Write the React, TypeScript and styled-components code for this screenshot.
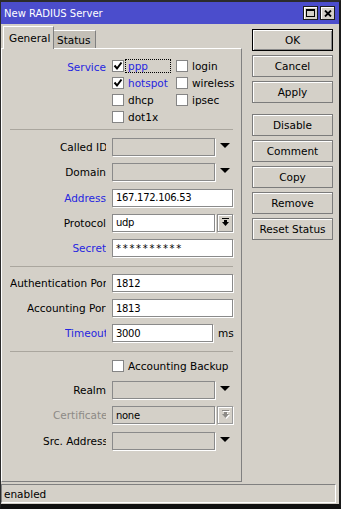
import React from 'react';
import styled, { createGlobalStyle } from 'styled-components';

const Global = createGlobalStyle`
  html, body { margin: 0; padding: 0; background: #161616; }
  body { font-family: "DejaVu Sans", "Liberation Sans", sans-serif; font-size: 10.5px; color: #000; }
`;

const Window = styled.div`
  width: 341px;
  height: 509px;
  box-sizing: border-box;
  border-top: 2px solid #2b2b2b;
  border-left: 1px solid #2b2b2b;
  border-right: 2px solid #1a1a1a;
  border-bottom: 5px solid #111;
  background: #d4d0c8;
  display: flex;
  flex-direction: column;
`;

const TitleBar = styled.div`
  height: 22px;
  flex: none;
  background: #4b4dcc;
  color: #fff;
  display: flex;
  align-items: center;
  padding: 0 4px 0 3px;
  font-size: 10px;
`;

const TitleText = styled.span`
  flex: 1;
  white-space: nowrap;
`;

const TitleButtons = styled.div`
  display: flex;
  gap: 2px;
`;

const TitleButton = styled.div`
  width: 15px;
  height: 14px;
  box-sizing: border-box;
  background: #d4d0c8;
  border: 1px solid #1c1c1c;
  box-shadow: inset 1px 1px 0 #fff;
  display: flex;
  align-items: center;
  justify-content: center;
`;

const Body = styled.div`
  flex: 1;
  display: flex;
  flex-direction: column;
  padding: 2px 3px 1px 0;
  min-height: 0;
`;

const Main = styled.div`
  flex: 1;
  display: flex;
  min-height: 0;
`;

const LeftCol = styled.div`
  width: 241px;
  display: flex;
  flex-direction: column;
`;

const Tabs = styled.div`
  height: 23px;
  display: flex;
  align-items: flex-end;
  padding-left: 2px;
  margin-bottom: -1px;
  position: relative;
  z-index: 1;
`;

const Tab = styled.div<{ $active?: boolean }>`
  box-sizing: border-box;
  display: flex;
  align-items: center;
  white-space: nowrap;
  border-top: 1px solid #fff;
  border-right: 1px solid #808080;
  ${(p) =>
    p.$active
      ? `
    width: 51px;
    height: 23px;
    padding-left: 5px;
    border-left: 1px solid #fff;
    background: #d4d0c8;
  `
      : `
    width: 42px;
    height: 18px;
    padding-left: 3px;
    margin-bottom: 1px;
    background: #c3bfb7;
  `}
`;

const Panel = styled.div`
  flex: 1;
  box-sizing: border-box;
  border-top: 1px solid #fff;
  border-left: 1px solid #fff;
  border-right: 1px solid #808080;
  border-bottom: 1px solid #808080;
  padding-top: 10px;
  display: flex;
  flex-direction: column;
`;

const Row = styled.div`
  display: grid;
  grid-template-columns: 104px auto;
  column-gap: 6px;
  align-items: center;
  height: 18px;
`;

const ServiceRow = styled.div`
  display: grid;
  grid-template-columns: 104px auto;
  column-gap: 6px;
  align-items: start;
`;

const LabelCell = styled.div<{ $top?: boolean }>`
  display: flex;
  justify-content: flex-end;
  overflow: hidden;
  white-space: nowrap;
  ${(p) => (p.$top ? 'height: 15px; align-items: center;' : '')}
`;

const LabelText = styled.span<{ $tone?: 'blue' | 'gray'; $clip?: number }>`
  white-space: nowrap;
  overflow: hidden;
  color: ${(p) => (p.$tone === 'blue' ? '#2626e0' : p.$tone === 'gray' ? '#8c8a86' : '#000')};
  ${(p) => (p.$clip ? `max-width: ${p.$clip}px;` : '')}
`;

const CheckGrid = styled.div`
  display: grid;
  grid-template-columns: 64px auto;
  grid-auto-rows: 17px;
`;

const CheckItem = styled.div`
  display: flex;
  align-items: flex-start;
`;

const Box = styled.div`
  width: 12px;
  height: 12px;
  box-sizing: border-box;
  margin-top: 1px;
  margin-right: 1px;
  background: #fff;
  border: 1px solid #858585;
  display: flex;
  align-items: center;
  justify-content: center;
  flex: none;
`;

const CheckText = styled.span<{ $blue?: boolean; $focus?: boolean }>`
  height: 14px;
  box-sizing: border-box;
  display: flex;
  align-items: center;
  padding: 0 2px;
  border: 1px ${(p) => (p.$focus ? 'dotted #000' : 'solid transparent')};
  ${(p) => (p.$focus ? 'width: 46px;' : '')}
  color: ${(p) => (p.$blue ? '#2626e0' : '#000')};
  white-space: nowrap;
`;

const Separator = styled.div<{ $top: number; $bottom: number }>`
  height: 1px;
  width: 223px;
  margin: ${(p) => p.$top}px 0 ${(p) => p.$bottom}px 8px;
  background: #aaa69e;
  flex: none;
`;

const Stack = styled.div<{ $gap: number }>`
  display: flex;
  flex-direction: column;
  gap: ${(p) => p.$gap}px;
`;

const Control = styled.div`
  display: flex;
  align-items: flex-start;
  height: 18px;
`;

const Field = styled.div<{ $w: number; $white?: boolean; $secret?: boolean }>`
  width: ${(p) => p.$w}px;
  height: 18px;
  box-sizing: border-box;
  border: 1px solid #8a8a8a;
  box-shadow: 1px 1px 0 #fff;
  background: ${(p) => (p.$white ? '#fff' : 'transparent')};
  padding-left: 3px;
  display: flex;
  align-items: center;
  white-space: nowrap;
  overflow: hidden;
  flex: none;
  font-size: 10px;
  letter-spacing: ${(p) => (p.$secret ? '1.7px' : '-0.3px')};
`;

const ArrowSlot = styled.div`
  width: 18px;
  height: 18px;
  display: flex;
  justify-content: center;
  padding-top: 5px;
  box-sizing: border-box;
  padding-left: 1px;
`;

const DropButton = styled.div<{ $disabled?: boolean }>`
  width: 16px;
  height: 18px;
  margin-left: 2px;
  box-sizing: border-box;
  border: 1px solid ${(p) => (p.$disabled ? '#9a9a9a' : '#8a8a8a')};
  box-shadow: 1px 1px 0 #fff, inset 1px 1px 0 #fff;
  background: #d4d0c8;
  display: flex;
  align-items: center;
  justify-content: center;
`;

const Unit = styled.span`
  margin-left: 5px;
  align-self: center;
`;

const BackupRow = styled.div`
  display: grid;
  grid-template-columns: 104px auto;
  column-gap: 6px;
  height: 18px;
  align-items: center;
  margin-bottom: 6px;
`;

const BackupItem = styled.div`
  display: flex;
  align-items: center;
  gap: 4px;
`;

const BackupBox = styled(Box)`
  margin: 0;
`;

const RightCol = styled.div`
  width: 81px;
  margin-left: 10px;
  padding-top: 3px;
  display: flex;
  flex-direction: column;
  gap: 4px;
`;

const Button = styled.div<{ $default?: boolean; $spaced?: boolean }>`
  height: 22px;
  box-sizing: border-box;
  background: #d4d0c8;
  border: 1px solid ${(p) => (p.$default ? '#000' : '#7b7b7b')};
  box-shadow: inset 1px 1px 0 #fff${(p) => (p.$default ? ', inset -1px -1px 0 #8a8a8a' : '')};
  display: flex;
  align-items: center;
  justify-content: center;
  white-space: nowrap;
  ${(p) => (p.$spaced ? 'margin-top: 7px;' : '')}
`;

const StatusBar = styled.div`
  height: 19px;
  margin-top: 2px;
  box-sizing: border-box;
  border-top: 1px solid #808080;
  border-left: 1px solid #808080;
  border-bottom: 1px solid #fff;
  border-right: 1px solid #fff;
  padding-left: 2px;
  display: flex;
  align-items: center;
  flex: none;
`;

const Check = () => (
  <svg width="10" height="10" viewBox="0 0 10 10">
    <path d="M1.5 4.5 L4 7.5 L8.5 1.5" fill="none" stroke="#000" strokeWidth="2" />
  </svg>
);

const Triangle = () => (
  <svg width="10" height="5" viewBox="0 0 10 5">
    <polygon points="0,0 10,0 5,5" fill="#000" />
  </svg>
);

const DropIcon = ({ color, shadow }: { color: string; shadow?: boolean }) => (
  <svg width="9" height="10" viewBox="0 0 9 10">
    {shadow && (
      <g transform="translate(1,1)" fill="#fff">
        <rect x="1" y="0" width="7" height="1" />
        <rect x="3" y="2" width="3" height="3" />
        <polygon points="1,4 8,4 4.5,8" />
      </g>
    )}
    <g fill={color}>
      <rect x="1" y="0" width="7" height="1" />
      <rect x="3" y="2" width="3" height="3" />
      <polygon points="1,4 8,4 4.5,8" />
    </g>
  </svg>
);

const MaxIcon = () => (
  <svg width="9" height="8" viewBox="0 0 9 8">
    <rect x="0.5" y="0.5" width="8" height="7" fill="none" stroke="#000" />
    <rect x="0" y="0" width="9" height="2" fill="#000" />
  </svg>
);

const CloseIcon = () => (
  <svg width="8" height="7" viewBox="0 0 8 7">
    <path d="M1 0.5 L7 6.5 M7 0.5 L1 6.5" stroke="#000" strokeWidth="1.8" />
  </svg>
);

type Svc = { name: string; checked?: boolean; focus?: boolean };
const services: Svc[] = [
  { name: 'ppp', checked: true, focus: true },
  { name: 'login' },
  { name: 'hotspot', checked: true },
  { name: 'wireless' },
  { name: 'dhcp' },
  { name: 'ipsec' },
  { name: 'dot1x' },
];

const Label = ({ text, tone, clip }: { text: string; tone?: 'blue' | 'gray'; clip?: number }) => (
  <LabelCell>
    <LabelText $tone={tone} $clip={clip}>
      {text}
    </LabelText>
  </LabelCell>
);

export default function App() {
  return (
    <>
      <Global />
      <Window>
        <TitleBar>
          <TitleText>New RADIUS Server</TitleText>
          <TitleButtons>
            <TitleButton>
              <MaxIcon />
            </TitleButton>
            <TitleButton>
              <CloseIcon />
            </TitleButton>
          </TitleButtons>
        </TitleBar>
        <Body>
          <Main>
            <LeftCol>
              <Tabs>
                <Tab $active>General</Tab>
                <Tab>Status</Tab>
              </Tabs>
              <Panel>
                <ServiceRow>
                  <LabelCell $top>
                    <LabelText $tone="blue">Service</LabelText>
                  </LabelCell>
                  <CheckGrid>
                    {services.map((s) => (
                      <CheckItem key={s.name}>
                        <Box>{s.checked && <Check />}</Box>
                        <CheckText $blue={s.checked} $focus={s.focus}>
                          {s.name}
                        </CheckText>
                      </CheckItem>
                    ))}
                  </CheckGrid>
                </ServiceRow>
                <Separator $top={2} $bottom={8} />
                <Stack $gap={7.25}>
                  <Row>
                    <Label text="Called ID" clip={46} />
                    <Control>
                      <Field $w={103} />
                      <ArrowSlot>
                        <Triangle />
                      </ArrowSlot>
                    </Control>
                  </Row>
                  <Row>
                    <Label text="Domain" />
                    <Control>
                      <Field $w={103} />
                      <ArrowSlot>
                        <Triangle />
                      </ArrowSlot>
                    </Control>
                  </Row>
                  <Row>
                    <Label text="Address" tone="blue" />
                    <Control>
                      <Field $w={121} $white>
                        167.172.106.53
                      </Field>
                    </Control>
                  </Row>
                  <Row>
                    <Label text="Protocol" />
                    <Control>
                      <Field $w={103} $white>
                        udp
                      </Field>
                      <DropButton>
                        <DropIcon color="#000" />
                      </DropButton>
                    </Control>
                  </Row>
                  <Row>
                    <Label text="Secret" tone="blue" />
                    <Control>
                      <Field $w={121} $white $secret>
                        **********
                      </Field>
                    </Control>
                  </Row>
                </Stack>
                <Separator $top={9} $bottom={7} />
                <Stack $gap={7}>
                  <Row>
                    <Label text="Authentication Port" clip={96} />
                    <Control>
                      <Field $w={121} $white>
                        1812
                      </Field>
                    </Control>
                  </Row>
                  <Row>
                    <Label text="Accounting Port" clip={79} />
                    <Control>
                      <Field $w={121} $white>
                        1813
                      </Field>
                    </Control>
                  </Row>
                  <Row>
                    <Label text="Timeout" tone="blue" clip={41} />
                    <Control>
                      <Field $w={101} $white>
                        3000
                      </Field>
                      <Unit>ms</Unit>
                    </Control>
                  </Row>
                </Stack>
                <Separator $top={9} $bottom={5} />
                <BackupRow>
                  <span />
                  <BackupItem>
                    <BackupBox />
                    <span>Accounting Backup</span>
                  </BackupItem>
                </BackupRow>
                <Stack $gap={7.25}>
                  <Row>
                    <Label text="Realm" />
                    <Control>
                      <Field $w={103} />
                      <ArrowSlot>
                        <Triangle />
                      </ArrowSlot>
                    </Control>
                  </Row>
                  <Row>
                    <Label text="Certificate" tone="gray" clip={53} />
                    <Control>
                      <Field $w={103}>none</Field>
                      <DropButton $disabled>
                        <DropIcon color="#8c8a86" shadow />
                      </DropButton>
                    </Control>
                  </Row>
                  <Row>
                    <Label text="Src. Address" clip={63} />
                    <Control>
                      <Field $w={103} />
                      <ArrowSlot>
                        <Triangle />
                      </ArrowSlot>
                    </Control>
                  </Row>
                </Stack>
              </Panel>
            </LeftCol>
            <RightCol>
              <Button $default>OK</Button>
              <Button>Cancel</Button>
              <Button>Apply</Button>
              <Button $spaced>Disable</Button>
              <Button>Comment</Button>
              <Button>Copy</Button>
              <Button>Remove</Button>
              <Button>Reset Status</Button>
            </RightCol>
          </Main>
          <StatusBar>enabled</StatusBar>
        </Body>
      </Window>
    </>
  );
}
